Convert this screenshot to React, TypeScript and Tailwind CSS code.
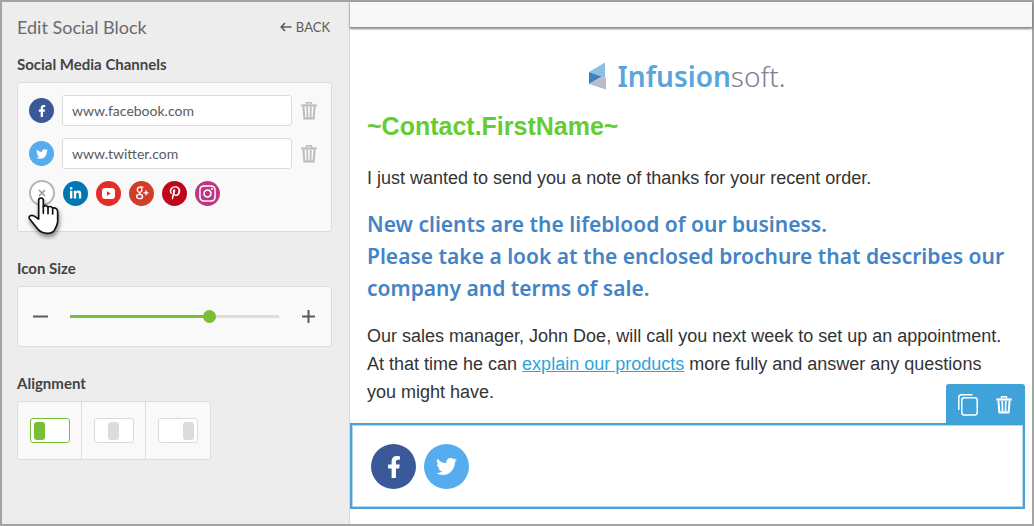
import { useState } from "react"
import type { ReactNode } from "react"
import { FaFacebookF, FaInstagram, FaLinkedinIn, FaPinterestP, FaTwitter } from "react-icons/fa"

const YoutubeIcon = () => (
    <svg width="13" height="11" viewBox="0 0 13 11">
        <rect width="13" height="11" rx="3" fill="#fff" />
        <path d="M5 3.2L8.8 5.5L5 7.8Z" fill="#e52d27" />
    </svg>
)

const GooglePlusIcon = () => (
    <svg width="14" height="14" viewBox="0 0 14 14" fill="none" stroke="currentColor" strokeWidth="1.3">
        <ellipse cx="4.6" cy="3.8" rx="2.3" ry="2.6" />
        <path d="M8.4 1.1H4.6" />
        <path d="M5.2 6.4Q4 7.4 5.4 8.3" />
        <ellipse cx="4.6" cy="10.5" rx="3" ry="2.2" />
        <path d="M11 4.3V9.3M8.5 6.8H13.5" />
    </svg>
)

const channels = [
    { name: "Facebook", url: "www.facebook.com", color: "bg-[#3b5998]", icon: <FaFacebookF size={12} /> },
    { name: "Twitter", url: "www.twitter.com", color: "bg-[#55acee]", icon: <FaTwitter size={12} /> },
]

const moreChannels = [
    { name: "LinkedIn", color: "bg-[#0077b5]", icon: <FaLinkedinIn size={13} /> },
    { name: "YouTube", color: "bg-[#e52d27]", icon: <YoutubeIcon /> },
    { name: "Google+", color: "bg-[#d03e2a]", icon: <GooglePlusIcon /> },
    { name: "Pinterest", color: "bg-[#bd081c]", icon: <FaPinterestP size={14} /> },
    { name: "Instagram", color: "bg-[#c13584]", icon: <FaInstagram size={19} /> },
]

const alignments = [
    { name: "Left", justify: "justify-start" },
    { name: "Center", justify: "justify-center" },
    { name: "Right", justify: "justify-end" },
]

const TrashIcon = () => (
    <svg width="16" height="18" viewBox="0 0 16 18" fill="none" stroke="currentColor">
        <path d="M5.5 2.5V.8h5v1.7" strokeWidth="1.4" />
        <path d="M0.3 3.5h15.4" strokeWidth="2.2" />
        <path d="M2.4 4.5l1 12h9.2l1-12" strokeWidth="2" />
        <path d="M6.2 5l.3 11M9.8 5l-.3 11" strokeWidth="1.7" />
    </svg>
)

const CopyIcon = () => (
    <svg width="20" height="22" viewBox="0 0 20 22" fill="none" stroke="currentColor" strokeWidth="1.5">
        <rect x="3.8" y="3.8" width="15.4" height="17.2" rx="2.4" />
        <path d="M.8 16V3.6Q.8.8 3.6.8H14.5" />
    </svg>
)

const HandPointer = () => (
    <svg
        className="pointer-events-none absolute top-4 -left-[2px] drop-shadow-[1px_3px_2px_rgba(0,0,0,0.45)]"
        width="34"
        height="40"
        viewBox="20 80 102 120"
        fill="#fff"
        stroke="#111"
        strokeWidth="5"
        strokeLinejoin="round"
        strokeLinecap="round"
    >
        <path d="M55 149V93Q55 86 62 86T69 93V112Q75 106 83 113Q91 109 97 116Q111 114 112 127V158Q110 170 104 179Q99 192 82 192Q63 192 53 180L28 149Q24 142 30 139Q37 136 44 142Z" />
        <path d="M69 112V132M83 113V133M97 116V134" fill="none" />
    </svg>
)

const Logo = () => (
    <div className="flex h-7 items-center gap-x-[10px]">
        <svg width="18" height="28" viewBox="0 0 18 28">
            <path d="M0 10L16 .5V16L12 14Z" fill="#8bc0e2" />
            <path d="M0 10L13 14.5L0 22Z" fill="#3d84bd" />
            <path d="M0 22L13 14.5L17 16V27.5Z" fill="#b9bccb" />
        </svg>
        <p className="font-['Noto_Sans','Open_Sans',sans-serif] text-[28px] leading-7">
            <span className="font-semibold text-[#5aa5dc]">Infusion</span>
            <span className="font-light text-[#7d8190]">soft.</span>
        </p>
    </div>
)

const Section = ({ title, children }: { title: string; children: ReactNode }) => (
    <section>
        <h2 className="mb-2 text-[15px] leading-5 font-bold text-[#444]">{title}</h2>
        {children}
    </section>
)

const Sidebar = () => {
    const [size, setSize] = useState(68)
    const [align, setAlign] = useState("Left")

    return (
        <aside className="w-[348px] shrink-0 border-r border-[#d8d8d8] bg-[#ededed] pt-[15px] pr-[17px] pl-[15px] font-[Lato,sans-serif] text-[#5a5a5a]">
            <div className="mb-[17px] flex items-center justify-between">
                <h1 className="text-lg leading-5 text-[#6a6a6a]">Edit Social Block</h1>
                <button className="flex items-center gap-x-1 pr-[2px] text-[13px] leading-5">
                    <svg width="12" height="10" viewBox="0 0 12 10" fill="none" stroke="currentColor" strokeWidth="1.6">
                        <path d="M11.5 5H1.5M5 1L1.2 5L5 9" />
                    </svg>
                    BACK
                </button>
            </div>

            <div className="flex flex-col gap-y-[26px]">
                <Section title="Social Media Channels">
                    <div className="rounded-[3px] border border-[#dcdcdc] bg-[#f9f9f9] pt-3 pr-[14px] pb-[25px] pl-[11px]">
                        <div className="flex flex-col gap-y-3">
                            {channels.map((channel) => (
                                <div key={channel.name} className="flex items-center">
                                    <span
                                        className={`mr-2 flex size-[25px] items-center justify-center rounded-full text-white ${channel.color}`}
                                    >
                                        {channel.icon}
                                    </span>
                                    <input
                                        type="text"
                                        aria-label={channel.name}
                                        defaultValue={channel.url}
                                        className="h-[31px] min-w-0 flex-1 rounded-[3px] border border-[#dcdcdc] bg-white px-[9px] text-sm outline-none"
                                    />
                                    <button aria-label={`Remove ${channel.name}`} className="ml-[9px] text-[#bbb]">
                                        <TrashIcon />
                                    </button>
                                </div>
                            ))}
                        </div>
                        <div className="mt-[11px] flex items-center gap-x-2">
                            <div className="relative">
                                <button
                                    aria-label="Close"
                                    className="flex size-[26px] items-center justify-center rounded-full border-2 border-[#b5b5b5] bg-white text-[#999]"
                                >
                                    <svg width="8" height="8" viewBox="0 0 8 8" stroke="currentColor" strokeWidth="1.6">
                                        <path d="M1 1L7 7M7 1L1 7" />
                                    </svg>
                                </button>
                                <HandPointer />
                            </div>
                            {moreChannels.map((channel) => (
                                <button
                                    key={channel.name}
                                    aria-label={`Add ${channel.name}`}
                                    className={`flex size-[25px] items-center justify-center rounded-full text-white ${channel.color}`}
                                >
                                    {channel.icon}
                                </button>
                            ))}
                        </div>
                    </div>
                </Section>

                <Section title="Icon Size">
                    <div className="flex h-[61px] items-center rounded-[3px] border border-[#dcdcdc] bg-[#f9f9f9] px-[15px]">
                        <button aria-label="Smaller" onClick={() => setSize(size - 1)}>
                            <svg width="15" height="15" viewBox="0 0 15 15" stroke="#5a5a5a" strokeWidth="2">
                                <path d="M0 7.5H15" />
                            </svg>
                        </button>
                        <input
                            type="range"
                            aria-label="Icon Size"
                            value={size}
                            onChange={(e) => setSize(Number(e.target.value))}
                            style={{
                                backgroundImage: `linear-gradient(to right, #78be37 ${size}%, #dedede ${size}%)`,
                            }}
                            className="mx-[22px] h-[3px] min-w-0 flex-1 appearance-none [&::-webkit-slider-thumb]:size-[13px] [&::-webkit-slider-thumb]:appearance-none [&::-webkit-slider-thumb]:rounded-full [&::-webkit-slider-thumb]:bg-[#78be37]"
                        />
                        <button aria-label="Larger" onClick={() => setSize(size + 1)}>
                            <svg width="15" height="15" viewBox="0 0 15 15" stroke="#5a5a5a" strokeWidth="2">
                                <path d="M1 7.5H14M7.5 1V14" />
                            </svg>
                        </button>
                    </div>
                </Section>

                <Section title="Alignment">
                    <div className="inline-flex divide-x divide-[#dcdcdc] rounded-[3px] border border-[#dcdcdc] bg-[#f9f9f9]">
                        {alignments.map(({ name, justify }) => (
                            <button
                                key={name}
                                aria-label={name}
                                aria-pressed={align === name}
                                onClick={() => setAlign(name)}
                                className="flex h-[57px] w-16 items-center justify-center"
                            >
                                <span
                                    className={`flex h-[25px] w-10 items-center rounded-[3px] border bg-white px-[3px] ${justify} ${align === name ? "border-[#78be37]" : "border-[#dcdcdc]"}`}
                                >
                                    <span
                                        className={`h-[18px] w-[11px] rounded-[3px] ${align === name ? "bg-[#78be37]" : "bg-[#dcdcdc]"}`}
                                    />
                                </span>
                            </button>
                        ))}
                    </div>
                </Section>
            </div>
        </aside>
    )
}

const SocialBlock = () => (
    <div className="relative mt-[17px] mr-[7px] flex gap-x-2 border-2 border-[#4f9fd8] pt-[19px] pb-[18px] pl-[19px] inset-ring inset-ring-[#b5d7f0]">
        <div className="absolute -right-[2px] bottom-full flex h-[41px] w-[79px] items-center justify-between rounded-t-[3px] bg-[#3fa2d9] pr-[13px] pl-3 text-white">
            <button aria-label="Duplicate">
                <CopyIcon />
            </button>
            <button aria-label="Delete">
                <TrashIcon />
            </button>
        </div>
        <a
            href="#facebook"
            aria-label="Facebook"
            className="flex size-[45px] items-center justify-center rounded-full bg-[#3b5998] text-white"
        >
            <FaFacebookF size={22} />
        </a>
        <a
            href="#twitter"
            aria-label="Twitter"
            className="flex size-[45px] items-center justify-center rounded-full bg-[#55acee] text-white"
        >
            <FaTwitter size={21} />
        </a>
    </div>
)

const Preview = () => (
    <main className="min-w-0 flex-1 bg-white">
        <div className="h-[26px] border-b border-[#909090] bg-[#f8f8f8] shadow-[0_1px_2px_rgba(0,0,0,0.5)]" />
        <div className="pt-[34px] pr-6 pl-[17px] font-['Liberation_Sans',Arial,sans-serif] text-lg leading-7 text-[#333]">
            <div className="flex justify-center">
                <Logo />
            </div>
            <h2 className="mt-5 text-[25px] leading-8 font-bold text-[#66cc33]">~Contact.FirstName~</h2>
            <p className="mt-[22px]">I just wanted to send you a note of thanks for your recent order.</p>
            <h3 className="mt-4 font-['Noto_Sans',sans-serif] text-[21px] leading-8 font-semibold text-[#4484c4]">
                New clients are the lifeblood of our business.
                <br />
                Please take a look at the enclosed brochure that describes our company and terms of sale.
            </h3>
            <p className="mt-[18px]">
                Our sales manager, John Doe, will call you next week to set up an appointment. At that time he can{" "}
                <a href="#products" className="text-[#29a5dc] underline">
                    explain our products
                </a>{" "}
                more fully and answer any questions you might have.
            </p>
        </div>
        <SocialBlock />
    </main>
)

const App = () => {
    return (
        <div className="flex min-h-screen border-2 border-[#a3a3a3]">
            <Sidebar />
            <Preview />
        </div>
    )
}

export default App
